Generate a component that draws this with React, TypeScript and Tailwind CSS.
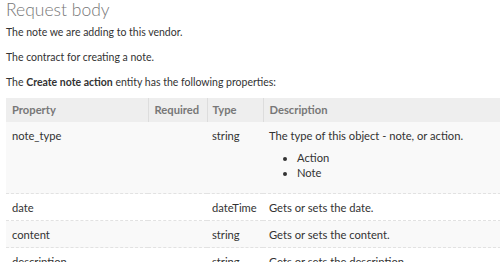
const rows = [
	{ name: "note_type", required: "", type: "string", description: "The type of this object - note, or action.", values: ["Action", "Note"] },
	{ name: "date", required: "", type: "dateTime", description: "Gets or sets the date." },
	{ name: "content", required: "", type: "string", description: "Gets or sets the content." },
	{ name: "description", required: "", type: "string", description: "Gets or sets the description." },
];

function App() {
	return (
		<div className="w-[500px] h-[262px] overflow-hidden bg-white font-['Lato',sans-serif] text-[#333]">
			<div className="pl-[6px]">
				<h2 className="text-[17.5px] leading-[20px] text-[#777] font-light">Request body</h2>
				<p className="mt-[5px] leading-[15px] text-[10.5px]">The note we are adding to this vendor.</p>
				<p className="mt-[10px] leading-[15px] text-[10.5px]">The contract for creating a note.</p>
				<p className="mt-[10px] leading-[15px] text-[10.5px]">
					The <strong>Create note action</strong> entity has the following properties:
				</p>
				<table className="mt-[8px] w-[560px] border-collapse text-[11.2px]">
					<thead>
						<tr className="bg-[#eeeeee] text-[#777] h-[24px]">
							<th className="w-[142px] text-left pl-[6px] font-bold">Property</th>
							<th className="w-[59px] text-left pl-[6px] font-bold border-l border-[#dddddd]">Required</th>
							<th className="w-[56px] text-left pl-[5px] font-bold border-l border-[#dddddd]">Type</th>
							<th className="text-left pl-[6px] font-bold border-l border-[#dddddd]">Description</th>
						</tr>
					</thead>
					<tbody>
						{rows.map((row, i) => (
							<tr key={row.name} className={`${i % 2 === 0 ? "bg-[#f9f9f9]" : "bg-white"} border-b border-dashed border-[#e2e2e2] align-top`}>
								<td className="pl-[6px] pt-[6px] pb-[5px] leading-[15px]">{row.name}</td>
								<td className="pl-[6px] pt-[6px] pb-[5px] leading-[15px]">{row.required}</td>
								<td className="pl-[5px] pt-[6px] pb-[5px] leading-[15px]">{row.type}</td>
								<td className={`pl-[6px] pt-[6px] leading-[15px] ${row.values ? "pb-[13px]" : "pb-[5px]"}`}>
									{row.description}
									{row.values && (
										<ul className="list-disc pl-[28px] mt-[7px]">
											{row.values.map((v) => (
												<li key={v} className="leading-[15px]">{v}</li>
											))}
										</ul>
									)}
								</td>
							</tr>
						))}
					</tbody>
				</table>
			</div>
		</div>
	);
}

export default App;
